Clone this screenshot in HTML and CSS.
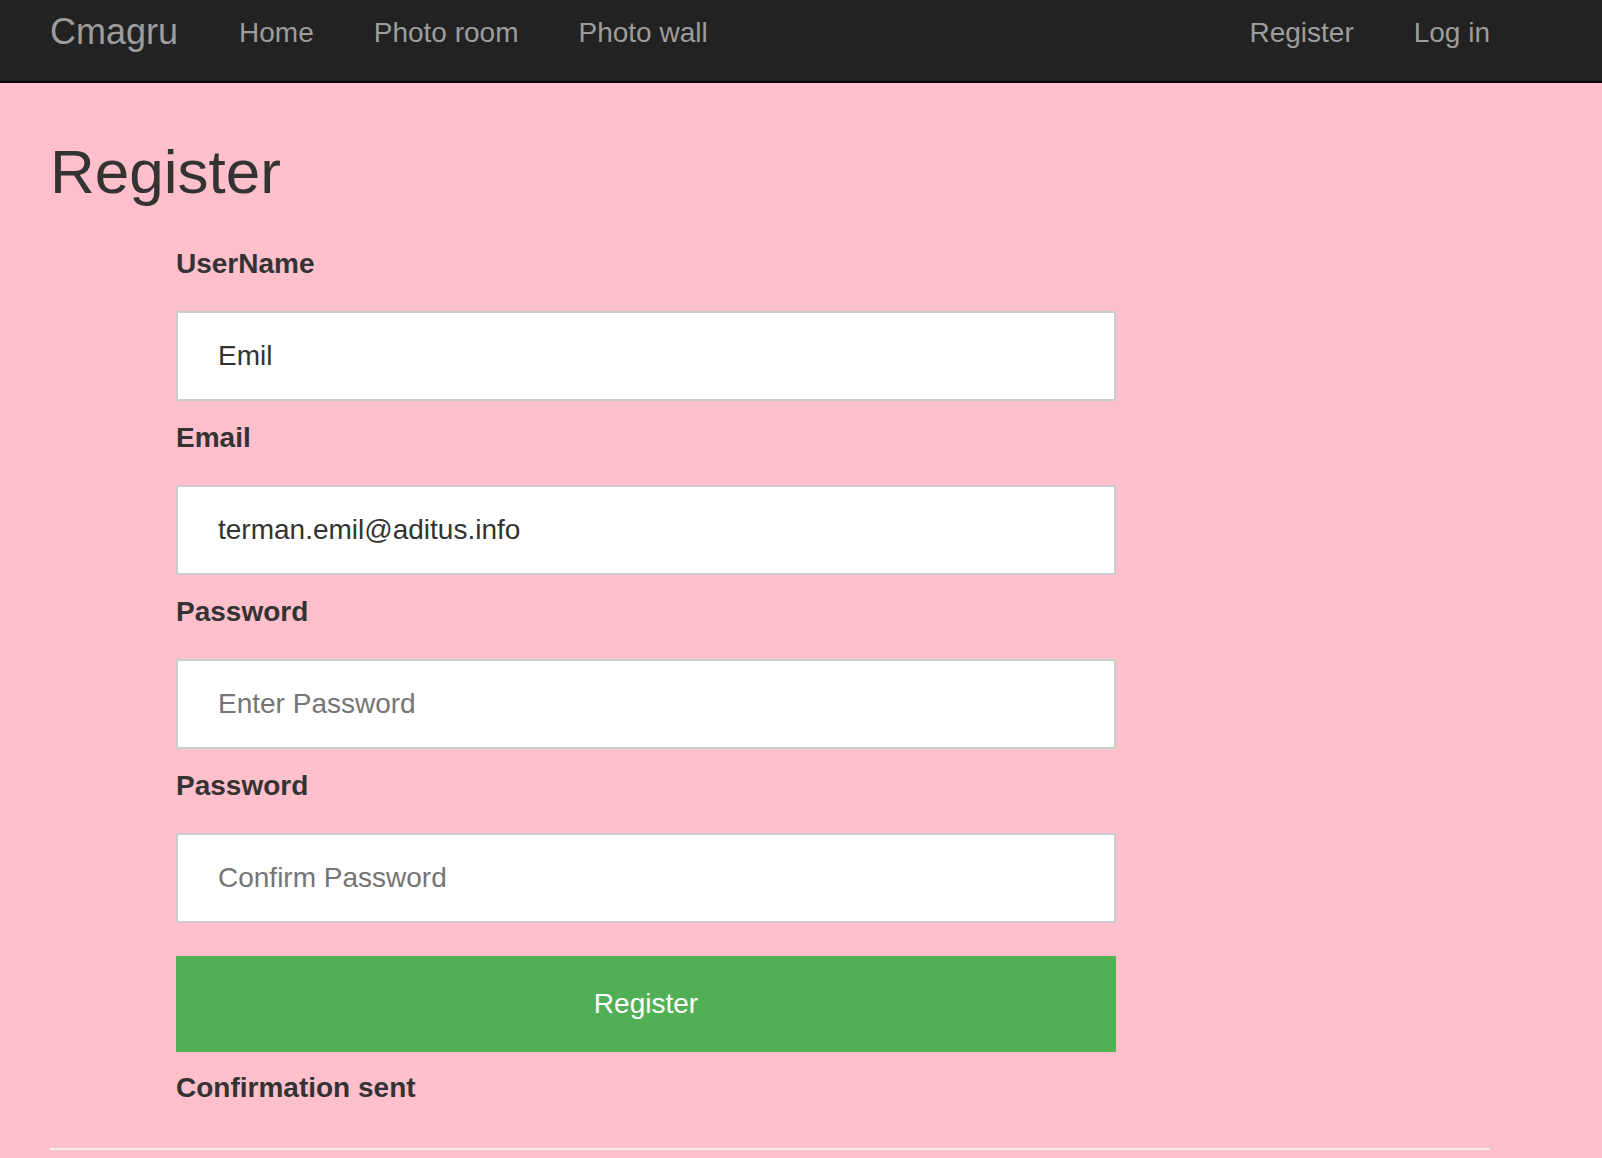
FILE: index.html
```html
<!DOCTYPE html>
<html lang="en">
<head>
<meta charset="utf-8">
<title>Cmagru - Register</title>
<link rel="stylesheet" href="styles.css">
</head>
<body>
<nav class="navbar">
  <div class="nav-inner">
    <a class="brand" href="#">Cmagru</a>
    <ul class="nav-links">
      <li><a href="#">Home</a></li>
      <li><a href="#">Photo room</a></li>
      <li><a href="#">Photo wall</a></li>
    </ul>
    <ul class="nav-links nav-right">
      <li><a href="#">Register</a></li>
      <li><a href="#">Log in</a></li>
    </ul>
  </div>
</nav>
<main class="container">
  <h1 class="page-title">Register</h1>
  <form class="reg-form">
    <div class="form-group">
      <label class="form-label" for="username">UserName</label>
      <input class="form-input" id="username" type="text" value="Emil">
    </div>
    <div class="form-group">
      <label class="form-label" for="email">Email</label>
      <input class="form-input" id="email" type="email" value="terman.emil@aditus.info">
    </div>
    <div class="form-group">
      <label class="form-label" for="pw">Password</label>
      <input class="form-input" id="pw" type="password" placeholder="Enter Password">
    </div>
    <div class="form-group">
      <label class="form-label" for="pw2">Password</label>
      <input class="form-input" id="pw2" type="password" placeholder="Confirm Password">
    </div>
    <button class="btn-register" type="button">Register</button>
    <p class="status">Confirmation sent</p>
  </form>
  <hr class="rule">
</main>
</body>
</html>
```
FILE: styles.css
```css
html, body {
  margin: 0;
  padding: 0;
}
body {
  background: #ffc0cb;
  font-family: "Liberation Sans", Arial, Helvetica, sans-serif;
  color: #333;
  min-height: 1158px;
}
a {
  text-decoration: none;
}
.navbar {
  background: #222;
  border-bottom: 2px solid #080808;
  height: 81px;
}
.nav-inner {
  width: 1440px;
  margin-left: 50px;
  display: flex;
  align-items: flex-start;
}
.brand {
  font-size: 36px;
  line-height: 40px;
  padding-top: 12px;
  padding-right: 31px;
  color: #9d9d9d;
}
.nav-links {
  list-style: none;
  margin: 0;
  padding: 0;
  display: flex;
}
.nav-links a {
  display: block;
  font-size: 28px;
  line-height: 40px;
  padding: 13px 30px 0;
  color: #9d9d9d;
}
.nav-right {
  margin-left: auto;
  margin-right: -30px;
}
.container {
  width: 1440px;
  margin-left: 50px;
}
.page-title {
  font-size: 62px;
  font-weight: 500;
  line-height: 67px;
  margin: 55px 0 39px;
}
.reg-form {
  margin-left: 126px;
  width: 940px;
}
.form-group {
  margin-bottom: 17px;
}
.form-label {
  display: block;
  font-size: 28px;
  font-weight: bold;
  line-height: 40px;
  margin-bottom: 27px;
}
.form-input {
  display: block;
  box-sizing: border-box;
  width: 940px;
  height: 90px;
  border: 2px solid #ccc;
  border-radius: 0;
  background: #fff;
  padding: 0 40px;
  font-family: "Liberation Sans", Arial, Helvetica, sans-serif;
  font-size: 28px;
  color: #333;
  outline: none;
}
.form-input::placeholder {
  color: #757575;
}
.btn-register {
  display: block;
  width: 940px;
  height: 96px;
  margin-top: 33px;
  border: none;
  border-radius: 0;
  background: #51b056;
  color: #fff;
  font-family: "Liberation Sans", Arial, Helvetica, sans-serif;
  font-size: 28px;
  cursor: pointer;
}
.status {
  font-size: 28px;
  font-weight: bold;
  line-height: 40px;
  margin: 16px 0 0;
}
.rule {
  border: none;
  border-top: 2px solid #eee;
  margin: 40px 0 0;
}
```
